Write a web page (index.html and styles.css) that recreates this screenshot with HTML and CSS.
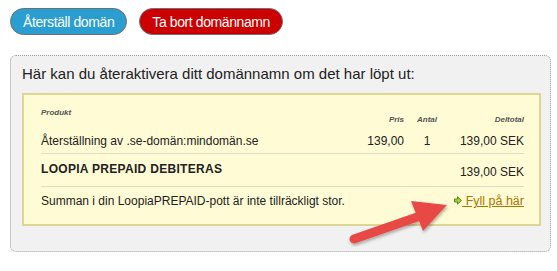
FILE: index.html
```html
<!DOCTYPE html>
<html>
<head>
    <title>Återställ domän</title>
    <link rel="stylesheet" href="styles.css">
</head>
<body>
    <div class="actions">
        <button class="btn btn-blue">Återställ domän</button>
        <button class="btn btn-red">Ta bort domännamn</button>
    </div>

    <div class="panel">
        <p class="intro">Här kan du återaktivera ditt domännamn om det har löpt ut:</p>

        <div class="order">
            <table>
                <thead>
                    <tr>
                        <th class="product">Produkt</th>
                        <th class="num price">Pris</th>
                        <th class="num qty">Antal</th>
                        <th class="num sum">Deltotal</th>
                    </tr>
                </thead>
                <tbody>
                    <tr class="item">
                        <td>Återställning av .se-domän:mindomän.se</td>
                        <td class="num">139,00</td>
                        <td class="num">1&nbsp;&nbsp;</td>
                        <td class="num">139,00 SEK</td>
                    </tr>
                    <tr class="total">
                        <td colspan="3">LOOPIA PREPAID DEBITERAS</td>
                        <td class="num">139,00 SEK</td>
                    </tr>
                    <tr class="note">
                        <td colspan="3">Summan i din LoopiaPREPAID-pott är inte tillräckligt stor.</td>
                        <td class="num">
                            <a href="#" class="refill">
                                <svg class="go" width="8" height="9" viewBox="0 0 8 9">
                                    <polygon points="0.5,3 3.5,3 3.5,0.8 7.5,4.5 3.5,8.2 3.5,6 0.5,6" fill="#9fd23a" stroke="#5f8a12" stroke-width="1"/>
                                </svg> Fyll på här</a>
                        </td>
                    </tr>
                </tbody>
            </table>
        </div>

        <svg class="pointer" width="120" height="60" viewBox="0 0 120 60">
            <defs>
                <filter id="shade" x="-20%" y="-20%" width="140%" height="140%">
                    <feDropShadow dx="1" dy="2" stdDeviation="1.5" flood-color="#000" flood-opacity="0.3"/>
                </filter>
            </defs>
            <g filter="url(#shade)">
                <line x1="9" y1="48" x2="78" y2="24" stroke="#e84a45" stroke-width="9" stroke-linecap="round"/>
                <polygon points="66,10 102,14 78,40" fill="#e84a45"/>
            </g>
        </svg>
    </div>
</body>
</html>
```

FILE: styles.css
```css
body {
    margin: 0;
    padding: 8px 6px 0 10px;
    font-family: "Liberation Sans", Arial, sans-serif;
    color: #222;
    background: #fff;
}

.actions {
    display: flex;
    gap: 12px;
}

.btn {
    font-family: "Liberation Sans", Arial, sans-serif;
    font-size: 14px;
    letter-spacing: -0.4px;
    color: #fff;
    height: 27px;
    padding: 0 12px;
    white-space: nowrap;
    border: 1px solid #6f6f6f;
    border-radius: 14px;
    cursor: pointer;
}

.btn-blue { background: #2a9dd1; }
.btn-red { background: #cc0000; }

.panel {
    position: relative;
    margin-top: 20px;
    width: 519px;
    padding: 9px 9px 25px 11px;
    background: #f1f1f1;
    border: 1px dotted #a0a0a0;
    border-radius: 6px;
}

.intro {
    margin: 0 0 11px 0;
    font-size: 15px;
    color: #222;
}

.order {
    background: #fffbd5;
    border: 2px solid #ddd594;
    padding: 10px 15px 9px 17px;
}

table {
    width: 100%;
    border-collapse: collapse;
    font-size: 12px;
}

th {
    font-size: 8px;
    font-style: italic;
    font-weight: bold;
    color: #555;
    padding: 0;
    text-align: left;
    vertical-align: top;
}

th.product {
    padding-top: 3px;
    height: 26px;
}

th.num {
    padding-top: 10px;
}

th.price { width: 60px; }
th.qty { width: 33px; }
th.sum { width: 87px; }

td {
    padding: 0;
    text-align: left;
}

.num { text-align: right; }

.item td {
    height: 19px;
    line-height: 14px;
    vertical-align: top;
    border-bottom: 1px solid #dcdcc8;
}

.total td {
    height: 29px;
    border-bottom: 1px solid #dcdcc8;
}

.total td:first-child {
    font-weight: bold;
    letter-spacing: 0.3px;
    padding-bottom: 2px;
}

.total td.num { padding-top: 3px; }

.note td {
    height: 28px;
}

.refill {
    color: #a87800;
    text-decoration: underline;
    font-size: 12.5px;
}

.go {
    vertical-align: 0;
}

.pointer {
    position: absolute;
    left: 334px;
    top: 135px;
}
```
